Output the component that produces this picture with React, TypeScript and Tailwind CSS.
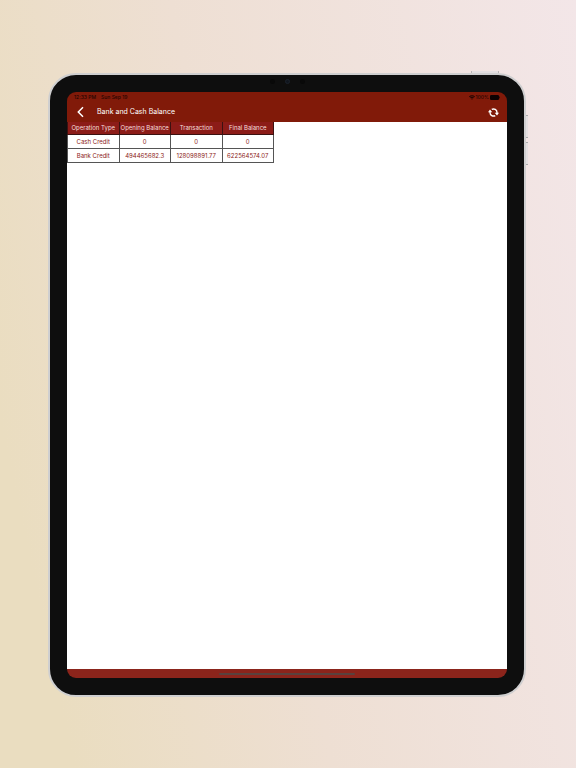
const COLUMNS = ["Operation Type", "Opening Balance", "Transaction", "Final Balance"];

const ROWS = [
  ["Cash Credit", "0", "0", "0"],
  ["Bank Credit", "494465682.3", "128098891.77", "622564574.07"],
];

function StatusBar() {
  return (
    <div className="flex h-[10px] items-center justify-between px-[7px] text-[5px] leading-[10px] font-medium text-[#240502]">
      <div className="flex gap-[5px]">
        <span>12:33 PM</span>
        <span>Sun Sep 19</span>
      </div>
      <div className="flex items-center gap-px">
        <svg viewBox="0 0 16 12" className="h-[5px] w-[6px]" fill="#1c0503" aria-hidden="true">
          <path d="M8 0C4.9 0 2.1 1.2 0 3.2l1.7 1.8A9 9 0 0 1 8 2.5 9 9 0 0 1 14.3 5L16 3.2A11.5 11.5 0 0 0 8 0Z" />
          <path d="M8 4.2a7.4 7.4 0 0 0-5.1 2L4.6 8A5 5 0 0 1 8 6.6 5 5 0 0 1 11.4 8l1.7-1.8A7.4 7.4 0 0 0 8 4.2Z" />
          <path d="M8 8.2a3.4 3.4 0 0 0-2.4 1L8 12l2.4-2.8A3.4 3.4 0 0 0 8 8.2Z" />
        </svg>
        <span>100%</span>
        <svg viewBox="0 0 20 10" className="h-[5px] w-[10px]" fill="#0d0202" aria-hidden="true">
          <rect width="18" height="10" rx="2.5" />
          <path d="M18.6 3c1 .3 1.4 1 1.4 2s-.4 1.7-1.4 2Z" />
        </svg>
      </div>
    </div>
  );
}

function NavBar() {
  return (
    <header className="flex h-5 items-center px-2 text-white">
      <button type="button" aria-label="Back" className="flex size-3 items-center justify-center">
        <svg viewBox="0 0 12 12" className="size-3" fill="none" stroke="currentColor" strokeWidth="1.5">
          <path d="M8 1.3 3.3 6 8 10.7" />
        </svg>
      </button>
      <h1 className="ml-[10px] flex-1 text-[7px] leading-[10px] font-normal">Bank and Cash Balance</h1>
      <button type="button" aria-label="Refresh" className="flex size-[11px] items-center justify-center">
        <svg viewBox="0 0 22 22" className="size-[11px]" fill="none" stroke="currentColor" strokeWidth="2.8">
          <path d="M4 10v1a7 7 0 0 0 10.5 6.100" />
          <path d="M18 12v-1A7 7 0 0 0 7.500 4.900" />
          <path d="M0 10.500 4 5l4.500 5.500ZM22 11.500 18 17l-4.500-5.500Z" fill="currentColor" stroke="none" />
        </svg>
      </button>
    </header>
  );
}

function BalanceTable() {
  return (
    <table className="w-[207px] table-fixed border-collapse text-center text-[6px]">
      <thead>
        <tr className="bg-[#8c1c18] leading-[12px] text-[#f6dedc]">
          {COLUMNS.map((column) => (
            <th key={column} scope="col" className="border border-t-0 border-[#3c1110] p-0 font-normal whitespace-nowrap">
              {column}
            </th>
          ))}
        </tr>
      </thead>
      <tbody className="leading-[13px] text-[#8c1c18]">
        {ROWS.map((row) => (
          <tr key={row[0]}>
            {row.map((value, idx) => (
              <td key={idx} className="border border-[#555] p-0">
                {value}
              </td>
            ))}
          </tr>
        ))}
      </tbody>
    </table>
  );
}

export default function App() {
  return (
    <div className="flex min-h-screen bg-linear-[78deg,#eaddc0_10%,#eedfd3_45%,#f3e6e8] pt-[73px] pr-[50px] pb-[71px] pl-12 font-['Inter','Liberation_Sans',sans-serif]">
      <div className="relative flex flex-1 rounded-[28px] border-2 border-[#cfcfd0] bg-[#0e0e0e] p-[17px]">
        {/* Hardware buttons and camera */}
        <div className="absolute -top-[4px] right-[25px] h-[2px] w-7 border-x border-[#b9b5b6] bg-[#e4dfe0]" />
        <div className="absolute top-[40px] -right-[4px] h-[23px] w-[2px] border-y border-[#a9aaab] bg-[#e4dfe0]" />
        <div className="absolute top-[67px] -right-[4px] h-[23px] w-[2px] border-y border-[#a9aaab] bg-[#e4dfe0]" />
        <div className="absolute inset-x-0 top-[4px] flex items-center justify-center gap-[10px]">
          <span className="size-[5px] rounded-full bg-[#090909]" />
          <span className="size-[5px] rounded-full border border-[#1b222c] bg-[#10151d]" />
          <span className="size-[5px] rounded-full bg-[#090909]" />
        </div>

        <main className="flex flex-1 flex-col overflow-hidden rounded-[9px]">
          <div className="bg-[#811a09]">
            <StatusBar />
            <NavBar />
          </div>
          <div className="flex-1 bg-white">
            <BalanceTable />
          </div>
          <footer className="flex h-[9px] items-center justify-center bg-[#8b241b]">
            <div className="h-[2px] w-[31%] rounded-full bg-[#59413d]" />
          </footer>
        </main>
      </div>
    </div>
  );
}
